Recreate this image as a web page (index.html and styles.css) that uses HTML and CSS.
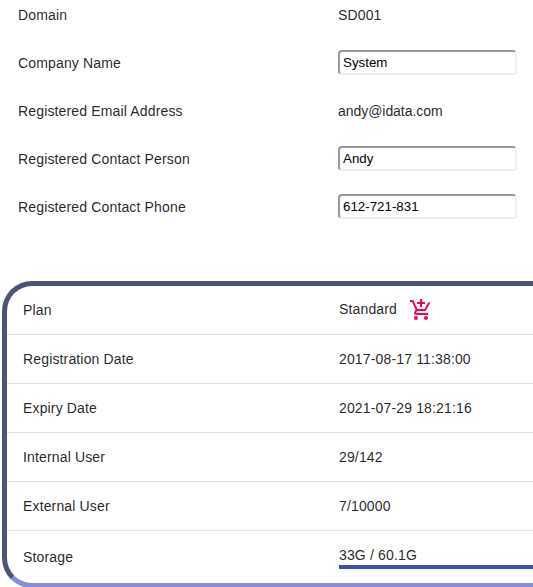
FILE: index.html
```html
<!DOCTYPE html>
<html lang="en">
<head>
    <meta charset="UTF-8">
    <meta name="viewport" content="width=device-width, initial-scale=1.0">
    <title>Company</title>
    <link rel="stylesheet" href="styles.css">
</head>
<body>
    <!-- Company details -->
    <div class="info">
        <div class="info-row">
            <label>Domain</label>
            <span>SD001</span>
        </div>
        <div class="info-row">
            <label for="company">Company Name</label>
            <input type="text" id="company" value="System">
        </div>
        <div class="info-row">
            <label>Registered Email Address</label>
            <span class="email">andy@idata.com</span>
        </div>
        <div class="info-row">
            <label for="person">Registered Contact Person</label>
            <input type="text" id="person" value="Andy">
        </div>
        <div class="info-row">
            <label for="phone">Registered Contact Phone</label>
            <input type="text" id="phone" value="612-721-831">
        </div>
    </div>

    <!-- Plan and usage -->
    <div class="plan">
        <div class="plan-row plan-name">
            <label>Plan</label>
            <span>Standard</span>
            <svg class="cart" viewBox="0 0 24 24">
                <path d="M11 9h2V6h3V4h-3V1h-2v3H8v2h3v3zm-4 9c-1.1 0-1.99.9-1.99 2S5.9 22 7 22s2-.9 2-2-.9-2-2-2zm10 0c-1.1 0-1.99.9-1.99 2s.89 2 1.99 2 2-.9 2-2-.9-2-2-2zm-9.83-3.25l.03-.12.9-1.63h7.45c.75 0 1.41-.41 1.75-1.03l3.86-7.01L19.42 4h-.01l-1.1 2-2.76 5H8.53l-.13-.27L6.16 6l-.95-2-.94-2H1v2h2l3.6 7.59-1.35 2.45c-.16.28-.25.61-.25.96 0 1.1.9 2 2 2h12v-2H7.42c-.13 0-.25-.11-.25-.25z"/>
            </svg>
        </div>
        <div class="plan-row">
            <label>Registration Date</label>
            <span>2017-08-17 11:38:00</span>
        </div>
        <div class="plan-row">
            <label>Expiry Date</label>
            <span>2021-07-29 18:21:16</span>
        </div>
        <div class="plan-row">
            <label>Internal User</label>
            <span>29/142</span>
        </div>
        <div class="plan-row">
            <label>External User</label>
            <span>7/10000</span>
        </div>
        <div class="plan-row storage">
            <label>Storage</label>
            <div class="usage">
                <span>33G / 60.1G</span>
                <div class="bar"></div>
            </div>
        </div>
    </div>
</body>
</html>
```
FILE: styles.css
```css
body {
    margin: 0;
    height: 587px;
    overflow: hidden;
    background-color: #fff;
    color: rgba(0, 0, 0, 0.87);
    font-family: "Liberation Sans", Arial, sans-serif;
    font-size: 14px;
    line-height: 20px;
    letter-spacing: 0.15px;
    display: flex;
    flex-direction: column;
}

/* Company details */
.info {
    margin-top: -9px;
    padding-left: 18px;
}

.info-row {
    display: flex;
    align-items: center;
    height: 48px;
}

.info-row label {
    width: 320px;
}

.info-row input {
    width: 179px;
    height: 25px;
    margin-bottom: 2px;
    box-sizing: border-box;
    padding: 1px 3px;
    border: 2px solid;
    border-color: #999 #eee #eee #999;
    border-radius: 4px;
    background-color: #fff;
    color: #000;
    font-family: inherit;
    font-size: 13.33px;
}

.email {
    letter-spacing: -0.05px;
}

/* Plan card, open on the right side */
.plan {
    flex-shrink: 0;
    margin: 50px 0 0 2px;
    border: 5px solid;
    border-color: #4b5377 #8490cf #8490cf #4b5377;
    border-right: none;
    border-radius: 30px 0 0 30px;
}

.plan-row {
    display: flex;
    align-items: center;
    height: 48px;
    padding-left: 16px;
    border-bottom: 1px solid #e0e0e0;
}

.plan-row label {
    width: 316px;
}

.plan-name span {
    padding-bottom: 2px;
}

.cart {
    width: 24px;
    height: 24px;
    margin-left: 12px;
    fill: #f50057;
}

.storage {
    height: 52px;
    border-bottom: none;
}

.usage {
    flex: 1;
}

.usage span {
    display: block;
}

.bar {
    height: 4px;
    background-color: #3f51b5;
}
```
